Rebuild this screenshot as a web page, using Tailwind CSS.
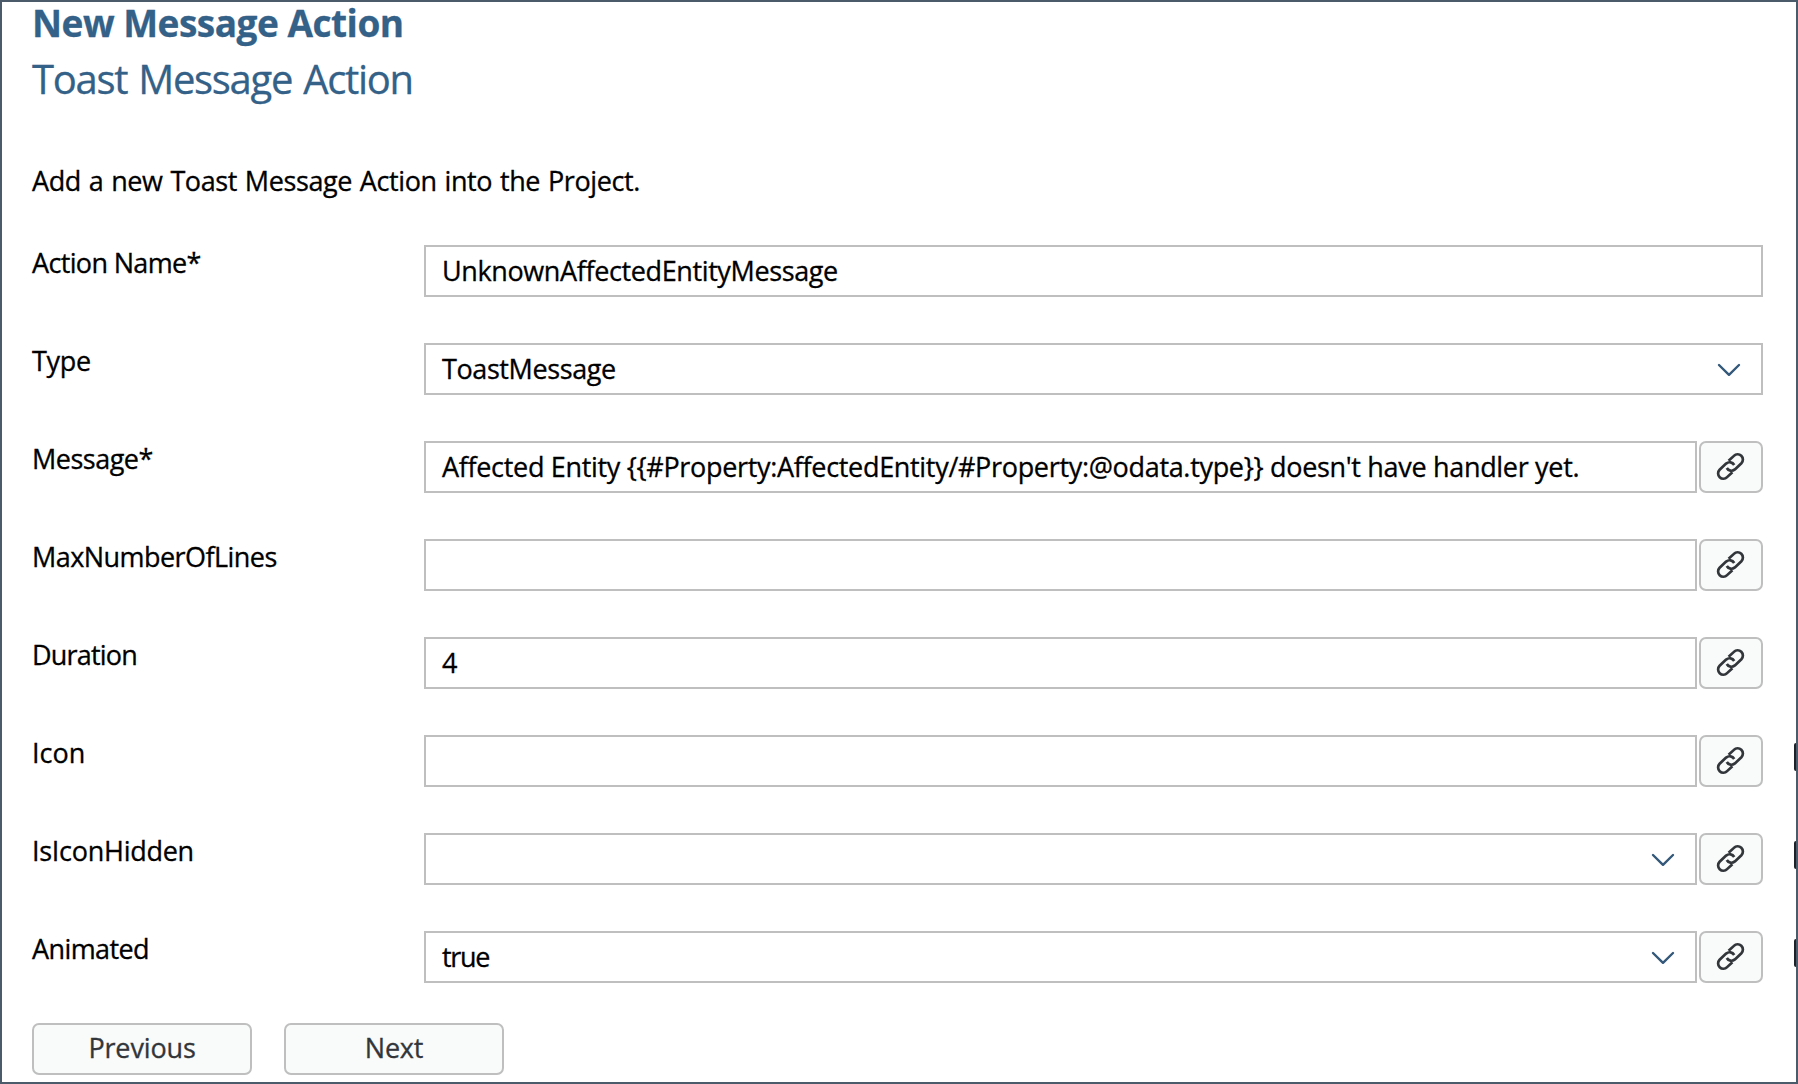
<!DOCTYPE html>
<html lang="en">
<head>
<meta charset="utf-8">
<title>New Message Action</title>
<script src="https://cdn.jsdelivr.net/npm/@tailwindcss/browser@4"></script>
</head>
<body class="bg-white">
<svg class="hidden">
  <symbol id="link" viewBox="0 0 32 32">
    <g fill="none" stroke="#32363a" stroke-width="2.7">
      <path d="M13.6 9.8 L18.9 4.9 A5.2 5.2 0 0 1 26.4 12.2 L19.9 18.4 C17.2 20.6 13.4 20 11.8 17"/>
      <path d="M17.4 21.2 L12.1 26.1 A5.2 5.2 0 0 1 4.6 18.8 L11.1 12.6 C13.8 10.4 17.6 11 19.2 14"/>
    </g>
  </symbol>
  <symbol id="chevron" viewBox="0 0 24 14">
    <path d="M2 2 L12 11.8 L22 2" fill="none" stroke="#34587a" stroke-width="2.4" stroke-linecap="round" stroke-linejoin="round"/>
  </symbol>
</svg>
<main class="relative flex h-[1084px] w-[1798px] flex-col border-2 border-[#4b5b69] pl-[30px] pr-[33px] font-['Open_Sans',sans-serif] text-[27px] leading-[36px] text-black [-webkit-text-stroke:0.3px]">
  <h1 class="h-[53px] pt-px text-[37px] leading-[40px] font-bold tracking-[-0.5px] text-[#346187]">New Message Action</h1>
  <h2 class="text-[40px] leading-[48px] tracking-[-1.3px] [word-spacing:2px] text-[#346187]">Toast Message Action</h2>
  <p class="mt-[60px] tracking-[-0.4px] [word-spacing:1.2px]">Add a new Toast Message Action into the Project.</p>

  <div class="mt-[46px] flex flex-col gap-[46px]">
    <div class="flex h-[52px]">
      <label class="w-[392px] tracking-[-0.659px]">Action Name*</label>
      <div class="flex flex-1 items-center border-2 border-[#bfbfbf] px-4 tracking-[-0.38px]">UnknownAffectedEntityMessage</div>
    </div>
    <div class="flex h-[52px]">
      <label class="w-[392px] tracking-[-0.306px]">Type</label>
      <div class="flex flex-1 items-center justify-between border-2 border-[#bfbfbf] pl-4 pr-[20px] tracking-[-0.405px]">ToastMessage<svg class="mt-0.5 h-[14px] w-[24px]"><use href="#chevron"/></svg></div>
    </div>
    <div class="flex h-[52px]">
      <label class="w-[392px] tracking-[-0.5px]">Message*</label>
      <div class="flex flex-1 items-center border-2 border-[#bfbfbf] px-4 tracking-[-0.319px] whitespace-nowrap">Affected Entity {{#Property:AffectedEntity/#Property:@odata.type}} doesn't have handler yet.</div>
      <div class="ml-0.5 flex w-16 items-center justify-center rounded-[7px] border-2 border-[#bfbfbf] bg-[#f9fafa]"><svg class="size-8"><use href="#link"/></svg></div>
    </div>
    <div class="flex h-[52px]">
      <label class="w-[392px] tracking-[-0.55px]">MaxNumberOfLines</label>
      <div class="flex-1 border-2 border-[#bfbfbf]"></div>
      <div class="ml-0.5 flex w-16 items-center justify-center rounded-[7px] border-2 border-[#bfbfbf] bg-[#f9fafa]"><svg class="size-8"><use href="#link"/></svg></div>
    </div>
    <div class="flex h-[52px]">
      <label class="w-[392px] tracking-[-0.8px]">Duration</label>
      <div class="flex flex-1 items-center border-2 border-[#bfbfbf] px-4">4</div>
      <div class="ml-0.5 flex w-16 items-center justify-center rounded-[7px] border-2 border-[#bfbfbf] bg-[#f9fafa]"><svg class="size-8"><use href="#link"/></svg></div>
    </div>
    <div class="relative flex h-[52px]">
      <label class="w-[392px]">Icon</label>
      <div class="flex-1 border-2 border-[#bfbfbf]"></div>
      <div class="ml-0.5 flex w-16 items-center justify-center rounded-[7px] border-2 border-[#bfbfbf] bg-[#f9fafa]"><svg class="size-8"><use href="#link"/></svg></div>
      <i class="absolute -right-[33px] top-2 h-7 w-0.5 rounded-l-[2px] bg-[#1c2228]"></i>
    </div>
    <div class="relative flex h-[52px]">
      <label class="w-[392px] tracking-[-0.28px]">IsIconHidden</label>
      <div class="flex flex-1 items-center justify-end border-2 border-[#bfbfbf] pr-[20px]"><svg class="mt-0.5 h-[14px] w-[24px]"><use href="#chevron"/></svg></div>
      <div class="ml-0.5 flex w-16 items-center justify-center rounded-[7px] border-2 border-[#bfbfbf] bg-[#f9fafa]"><svg class="size-8"><use href="#link"/></svg></div>
      <i class="absolute -right-[33px] top-2 h-7 w-0.5 rounded-l-[2px] bg-[#1c2228]"></i>
    </div>
    <div class="relative flex h-[52px]">
      <label class="w-[392px] tracking-[-0.6px]">Animated</label>
      <div class="flex flex-1 items-center justify-between border-2 border-[#bfbfbf] pl-4 pr-[20px] tracking-[-1.3px]">true<svg class="mt-0.5 h-[14px] w-[24px]"><use href="#chevron"/></svg></div>
      <div class="ml-0.5 flex w-16 items-center justify-center rounded-[7px] border-2 border-[#bfbfbf] bg-[#f9fafa]"><svg class="size-8"><use href="#link"/></svg></div>
      <i class="absolute -right-[33px] top-2 h-7 w-0.5 rounded-l-[2px] bg-[#1c2228]"></i>
    </div>
  </div>

  <div class="mt-10 flex gap-8 text-[#32363a]">
    <button class="h-[52px] w-[220px] rounded-[7px] border-2 border-[#bfbfbf] bg-[#f9fafa] pb-0.5 tracking-[-0.15px]">Previous</button>
    <button class="h-[52px] w-[220px] rounded-[7px] border-2 border-[#bfbfbf] bg-[#f9fafa] pb-0.5 tracking-[-0.2px]">Next</button>
  </div>
</main>
</body>
</html>
